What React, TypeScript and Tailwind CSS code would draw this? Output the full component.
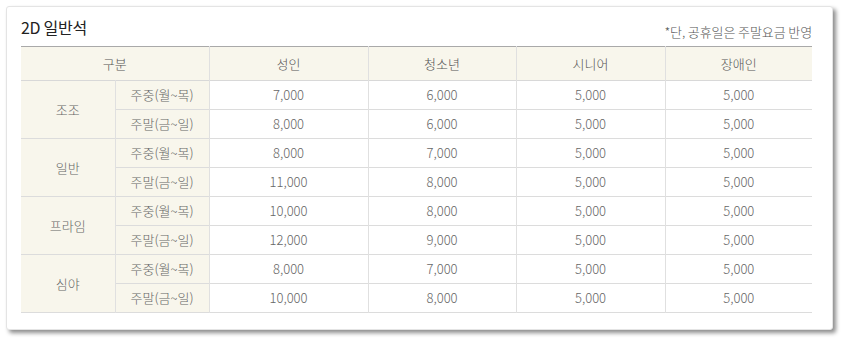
const rows = [
  { group: "조조", items: [["주중(월~목)", "7,000", "6,000", "5,000", "5,000"], ["주말(금~일)", "8,000", "6,000", "5,000", "5,000"]] },
  { group: "일반", items: [["주중(월~목)", "8,000", "7,000", "5,000", "5,000"], ["주말(금~일)", "11,000", "8,000", "5,000", "5,000"]] },
  { group: "프라임", items: [["주중(월~목)", "10,000", "8,000", "5,000", "5,000"], ["주말(금~일)", "12,000", "9,000", "5,000", "5,000"]] },
  { group: "심야", items: [["주중(월~목)", "8,000", "7,000", "5,000", "5,000"], ["주말(금~일)", "10,000", "8,000", "5,000", "5,000"]] },
];

export default function App() {
  return (
    <div className="w-[846px] h-[341px] bg-white pt-[6px] pl-[6px] font-['Noto_Sans_CJK_KR',sans-serif] font-light">
      <div className="w-[827px] h-[324px] bg-white rounded-[3px] border border-[#e4e4e4] shadow-[3px_3px_4px_rgba(0,0,0,0.45)] pl-[14px] pr-[20px]">
        {/* Title */}
        <div className="h-[39px] flex items-end justify-between pb-[11px]">
          <h2 className="text-[16px] leading-none text-[#222] font-normal tracking-[-0.3px]">2D 일반석</h2>
          <span className="text-[13px] leading-none text-[#555] tracking-[-0.1px] mb-[-3px]">*단, 공휴일은 주말요금 반영</span>
        </div>

        {/* Price table */}
        <table className="w-[791px] border-collapse table-fixed text-[13px] text-[#666]">
          <colgroup>
            <col className="w-[94px]" />
            <col className="w-[94px]" />
            <col className="w-[159px]" />
            <col className="w-[148px]" />
            <col className="w-[149px]" />
            <col className="w-[147px]" />
          </colgroup>
          <thead>
            <tr className="h-[34px] bg-[#f8f6ec] border-t border-t-[#a9a9a9] border-b border-b-[#d8d8d8]">
              <th colSpan={2} className="font-light text-[#555]">구분</th>
              <th className="font-light text-[#555] border-l border-[#e0e0e0]">성인</th>
              <th className="font-light text-[#555] border-l border-[#e0e0e0]">청소년</th>
              <th className="font-light text-[#555] border-l border-[#e0e0e0]">시니어</th>
              <th className="font-light text-[#555] border-l border-[#e0e0e0]">장애인</th>
            </tr>
          </thead>
          <tbody>
            {rows.map((r) =>
              r.items.map((it, i) => (
                <tr key={r.group + i} className="h-[29px] border-b border-[#dcdcdc]">
                  {i === 0 && (
                    <td rowSpan={2} className="bg-[#f8f6ec] text-center text-[#666] border-r border-[#e0e0e0]">
                      {r.group}
                    </td>
                  )}
                  <td className="bg-[#f8f6ec] text-center border-r border-[#e0e0e0]">{it[0]}</td>
                  {it.slice(1).map((v, j) => (
                    <td key={j} className={j < 3 ? "text-center border-r border-[#e0e0e0]" : "text-center"}>
                      {v}
                    </td>
                  ))}
                </tr>
              ))
            )}
          </tbody>
        </table>
      </div>
    </div>
  );
}
